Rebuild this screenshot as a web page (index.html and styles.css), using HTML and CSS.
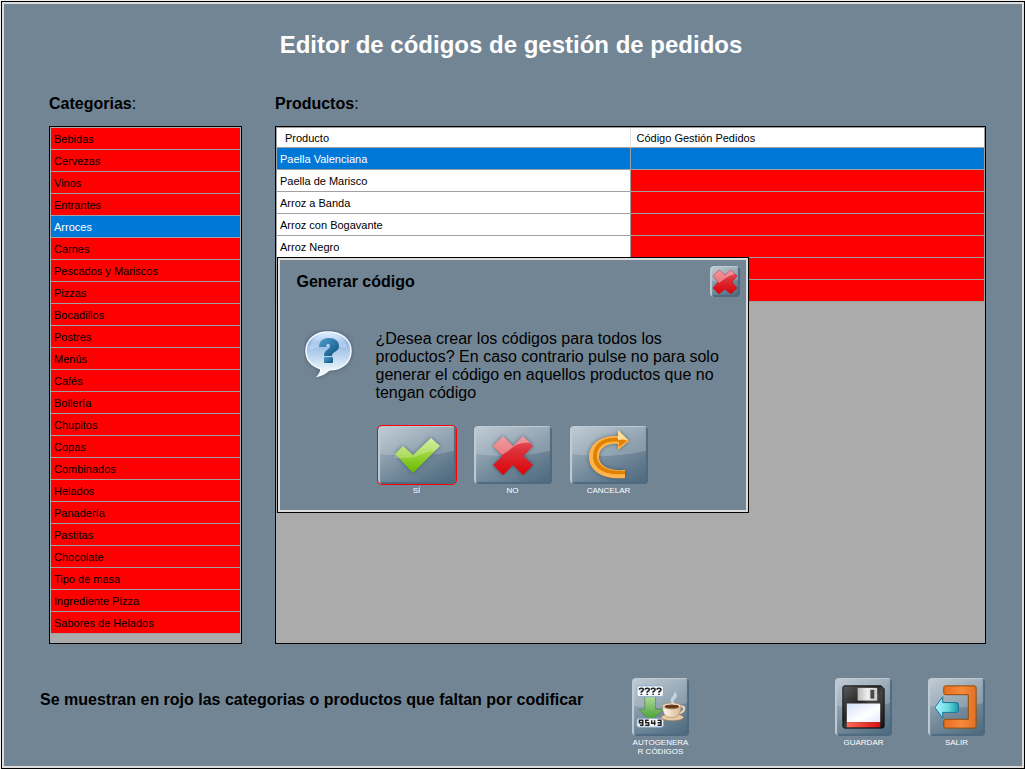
FILE: index.html
```html
<!DOCTYPE html>
<html lang="es">
<head>
<meta charset="utf-8">
<meta name="viewport" content="width=device-width, initial-scale=1">
<title>Editor de códigos de gestión de pedidos</title>
<link rel="stylesheet" href="styles.css">
</head>
<body>
<div class="window">
  <h1 class="title">Editor de códigos de gestión de pedidos</h1>

  <main class="panels">
    <section class="panel">
      <h2 class="heading">Categorias<span class="colon">:</span></h2>
      <ul class="box categories">
        <li><button class="category">Bebidas</button></li>
        <li><button class="category">Cervezas</button></li>
        <li><button class="category">Vinos</button></li>
        <li><button class="category">Entrantes</button></li>
        <li><button class="category selected">Arroces</button></li>
        <li><button class="category">Carnes</button></li>
        <li><button class="category">Pescados y Mariscos</button></li>
        <li><button class="category">Pizzas</button></li>
        <li><button class="category">Bocadillos</button></li>
        <li><button class="category">Postres</button></li>
        <li><button class="category">Menús</button></li>
        <li><button class="category">Cafés</button></li>
        <li><button class="category">Bollería</button></li>
        <li><button class="category">Chupitos</button></li>
        <li><button class="category">Copas</button></li>
        <li><button class="category">Combinados</button></li>
        <li><button class="category">Helados</button></li>
        <li><button class="category">Panadería</button></li>
        <li><button class="category">Pastitas</button></li>
        <li><button class="category">Chocolate</button></li>
        <li><button class="category">Tipo de masa</button></li>
        <li><button class="category">Ingrediente Pizza</button></li>
        <li><button class="category">Sabores de Helados</button></li>
      </ul>
    </section>

    <section class="panel">
      <h2 class="heading">Productos<span class="colon">:</span></h2>
      <div class="box">
        <table class="products">
          <thead>
            <tr><th class="name">Producto</th><th>Código Gestión Pedidos</th></tr>
          </thead>
          <tbody>
            <tr class="selected"><td>Paella Valenciana</td><td class="missing"></td></tr>
            <tr><td>Paella de Marisco</td><td class="missing"></td></tr>
            <tr><td>Arroz a Banda</td><td class="missing"></td></tr>
            <tr><td>Arroz con Bogavante</td><td class="missing"></td></tr>
            <tr><td>Arroz Negro</td><td class="missing"></td></tr>
            <tr><td></td><td class="missing"></td></tr>
            <tr><td></td><td class="missing"></td></tr>
          </tbody>
        </table>
      </div>
    </section>
  </main>

  <footer class="footer">
    <p class="note">Se muestran en rojo las categorias o productos que faltan por codificar</p>
    <button class="action generate">
      <span class="tile square">
        <svg viewBox="0 0 58 58" aria-hidden="true">
          <defs>
            <linearGradient id="arrowGreen" x1="0" y1="0" x2="0" y2="1"><stop offset="0" stop-color="#b5dc9c"/><stop offset="1" stop-color="#3f9a2c"/></linearGradient>
            <linearGradient id="cup" x1="0" y1="0" x2="1" y2="0"><stop offset="0" stop-color="#fffaf0"/><stop offset="1" stop-color="#d9b68e"/></linearGradient>
          </defs>
          <path d="M13 18h11v14h8L19 44 7 32h6z" fill="url(#arrowGreen)" stroke="#4f8f43" stroke-width=".7"/>
          <rect x="5" y="8" width="27" height="11" rx="2" fill="#f4f8fb" stroke="#88a8c8"/>
          <g fill="none" stroke="#222" stroke-width="1.6">
            <path d="M7.500 12q0-1.500 2-1.500t2 1.500q0 1-2 2v1m0 1v1.200M13.500 12q0-1.500 2-1.500t2 1.500q0 1-2 2v1m0 1v1.200M19.500 12q0-1.500 2-1.500t2 1.500q0 1-2 2v1m0 1v1.200M25.500 12q0-1.500 2-1.500t2 1.500q0 1-2 2v1m0 1v1.200"/>
          </g>
          <rect x="5" y="41" width="27" height="9" rx="2" fill="#f4f8fb" stroke="#88a8c8"/>
          <g fill="none" stroke="#222" stroke-width="1.500">
            <path d="M11 45.500H7.500V43H11v5H8M17 43h-3v2.500h3V48h-3.500M20 43v3h4m-1-3v5M26 43h3.500v5H26m0-2.500h3.500"/>
          </g>
          <ellipse cx="41" cy="40" rx="11.500" ry="3.500" fill="#e6c9a3" stroke="#9d7750" stroke-width=".7"/>
          <path d="M48 29q6-1 5 3t-8 4" fill="none" stroke="#e9d3b4" stroke-width="2.200"/>
          <path d="M31 28q0 11 7 12h5q7-1 7-12z" fill="url(#cup)" stroke="#a38763" stroke-width=".6"/>
          <ellipse cx="40.500" cy="28.500" rx="9.500" ry="3" fill="#f8ead6" stroke="#b08d68" stroke-width=".7"/>
          <ellipse cx="40.500" cy="29" rx="7.500" ry="2" fill="#693918"/>
          <path d="M42 27q-5-4-1-8t1-7q6 6 2 9t1 6" fill="#e6edf2" opacity=".65"/>
        </svg>
      </span>
      <span class="caption">AUTOGENERAR CÓDIGOS</span>
    </button>
    <button class="action">
      <span class="tile square">
        <svg viewBox="0 0 58 58" aria-hidden="true">
          <defs>
            <linearGradient id="disk" x1="0" y1="0" x2="1" y2="1"><stop offset="0" stop-color="#5b5b5b"/><stop offset=".4" stop-color="#242424"/><stop offset=".55" stop-color="#444"/><stop offset="1" stop-color="#111"/></linearGradient>
            <linearGradient id="label" x1="0" y1="0" x2="1" y2="1"><stop offset="0" stop-color="#d4e2f8"/><stop offset=".6" stop-color="#fff"/><stop offset="1" stop-color="#dfe8f8"/></linearGradient>
            <linearGradient id="band" x1="0" y1="0" x2="1" y2="0"><stop offset="0" stop-color="#ff6b55"/><stop offset="1" stop-color="#d90f12"/></linearGradient>
            <linearGradient id="shutter" x1="0" y1="0" x2="1" y2="0"><stop offset="0" stop-color="#b8b8b8"/><stop offset=".5" stop-color="#eee"/><stop offset="1" stop-color="#ccc"/></linearGradient>
          </defs>
          <path d="M10 8h37l3 3v38q0 2-2 2H10q-2 0-2-2V10q0-2 2-2z" fill="url(#disk)" stroke="#111"/>
          <path d="M23 10h20v13H23z" fill="url(#shutter)"/>
          <path d="M36 12h4v9h-4z" fill="#4a4a4a"/>
          <path d="M12 26h34v19H12z" fill="url(#label)"/>
          <path d="M12 45h34v5H12z" fill="url(#band)"/>
        </svg>
      </span>
      <span class="caption">GUARDAR</span>
    </button>
    <button class="action">
      <span class="tile square">
        <svg viewBox="0 0 58 58" aria-hidden="true">
          <defs>
            <linearGradient id="door" x1="0" y1="0" x2="1" y2="0"><stop offset="0" stop-color="#e56f22"/><stop offset=".55" stop-color="#f5893c"/><stop offset="1" stop-color="#e27123"/></linearGradient>
            <linearGradient id="exit" x1="0" y1="0" x2="1" y2="0"><stop offset="0" stop-color="#aaf5fa"/><stop offset=".55" stop-color="#6adbe3"/><stop offset="1" stop-color="#159ea5"/></linearGradient>
          </defs>
          <path d="M18 8h29q2 0 2 2v39q0 2-2 2H18q-2 0-2-2v-5q0-2 2-2h23V17H18q-2 0-2-2v-5q0-2 2-2z" fill="url(#door)" stroke="#8f4a08"/>
          <path d="M7 30l8-11v6h14q2 0 2 2v6q0 2-2 2H15v6z" fill="url(#exit)" stroke="#1f6f9c" stroke-linejoin="round"/>
        </svg>
      </span>
      <span class="caption">SALIR</span>
    </button>
  </footer>
</div>

<dialog class="dialog" open aria-labelledby="dialog-title">
  <header class="dialog-header">
    <h2 class="heading" id="dialog-title">Generar código</h2>
    <button class="tile close" aria-label="Cerrar">
      <svg viewBox="0 0 30 31" aria-hidden="true">
        <path d="M9 4l6 5 6-5 6 6-5 6 5 6-6 6-6-5-6 5-6-6 5-6-5-6z" fill="url(#red)" stroke="#b8141c" stroke-width=".6"/>
        <path d="M9 4l6 5 6-5 4 4q-5 1-9 4l-7 5-1-1-5-6z" fill="#fff" opacity=".38"/>
      </svg>
    </button>
  </header>
  <div class="message">
    <svg class="question" viewBox="0 0 50 50" aria-hidden="true">
      <defs>
        <linearGradient id="bubble" x1="0" y1="0" x2="0" y2="1"><stop offset="0" stop-color="#dcecff"/><stop offset=".25" stop-color="#8fb7e6"/><stop offset=".6" stop-color="#c3daf0"/><stop offset="1" stop-color="#fff"/></linearGradient>
        <linearGradient id="mark" x1="0" y1="0" x2="1" y2="1"><stop offset="0" stop-color="#4ea0d0"/><stop offset="1" stop-color="#0f507e"/></linearGradient>
        <linearGradient id="red" x1="0" y1="0" x2="0" y2="1"><stop offset="0" stop-color="#e85a63"/><stop offset=".4" stop-color="#dd2f38"/><stop offset="1" stop-color="#dc0208"/></linearGradient>
      </defs>
      <path class="shadow" d="M24 2c13 0 23 7 23 19S37 40 25 40c-3 3-6 5-11 6 2-2 3-4 3-7C8 36 2 30 2 21 2 9 12 2 24 2z" fill="url(#bubble)" stroke="#f6faff" stroke-width="1.500"/>
      <path d="M5 20C6 10 14 4 24 4s18 6 19 14Q25 13 5 20z" fill="#fff" opacity=".25"/>
      <path d="M15 17c0-7 5-9 10-9 6 0 10 3 10 8 0 6-7 5-7 10h-8c0-7 6-6 6-10 0-3-4-3-4 1z" fill="url(#mark)"/>
      <rect x="20" y="27" width="9" height="6" rx="1" fill="url(#mark)"/>
    </svg>
    <p class="text">¿Desea crear los códigos para todos los productos? En caso contrario pulse no para solo generar el código en aquellos productos que no tengan código</p>
  </div>
  <div class="choices">
    <button class="action focused">
      <span class="tile wide">
        <svg viewBox="0 0 78 58" aria-hidden="true">
          <defs><linearGradient id="green" x1="0" y1="0" x2="0" y2="1"><stop offset="0" stop-color="#c8ec8a"/><stop offset=".45" stop-color="#9bd63c"/><stop offset="1" stop-color="#66b800"/></linearGradient></defs>
          <path class="shadow" d="M17 28l8-8 10 9 18-17 9 8-27 27z" fill="url(#green)"/>
          <path d="M17 28l8-8 10 9 18-17 9 8-5 5q-9 1-15 4-6 3-12 3l-14 0z" fill="#fff" opacity=".22"/>
        </svg>
      </span>
      <span class="caption">SÍ</span>
    </button>
    <button class="action">
      <span class="tile wide">
        <svg viewBox="0 0 78 58" aria-hidden="true">
          <path class="shadow" d="M29 10l10 10 10-10 10 10-9.500 10L59 39 49 49 39 39 29 49 19 39l9.500-9L19 20z" fill="url(#red)"/>
          <path d="M29 10l10 10 10-10 7 7q-10-1-17 4-4 4-11 8L19 20z" fill="#fff" opacity=".4"/>
        </svg>
      </span>
      <span class="caption">NO</span>
    </button>
    <button class="action">
      <span class="tile wide">
        <svg viewBox="0 0 78 58" aria-hidden="true">
          <path class="shadow" d="M48 4l11 11-11 9v-6c-11-1-19 4-19 13s10 14 26 13v8C33 54 19 45 19 31S32 9 48 10z" fill="#ffb34c"/>
          <path d="M48 12c-14-2-25 6-25 18s11 20 32 18v-3c-18 1-28-5-28-15s9-16 22-14v5l8-6-8-4z" fill="#df8200"/>
          <path d="M48 4l10 10q-6-1-10 0z" fill="#ffdc98"/>
        </svg>
      </span>
      <span class="caption">CANCELAR</span>
    </button>
  </div>
</dialog>
</body>
</html>
```

FILE: styles.css
```css
* {
  box-sizing: border-box;
}

body {
  display: flex;
  min-height: 100vh;
  margin: 0;
  padding: 1px 0 0 1px;
  background: #eeeeee;
  color: #000;
  font-family: "Liberation Sans", Arial, sans-serif;
}

h1, h2, p, ul {
  margin: 0;
  padding: 0;
}

button {
  margin: 0;
  padding: 0;
  border: 0;
  background: none;
  color: inherit;
  font: inherit;
  cursor: pointer;
}

svg {
  display: block;
}

.window {
  display: flex;
  flex: 1;
  flex-direction: column;
  border: 1px solid #000;
  box-shadow: inset 0 0 0 2px #dcdcdc;
  background: #728595;
}

.title {
  padding: 28px 4px 0 0;
  color: #fff;
  font-size: 24px;
  line-height: 30px;
  text-align: center;
}

.heading {
  font-size: 16px;
  line-height: 20px;
}

.colon {
  font-weight: normal;
}

.panels {
  display: grid;
  flex: 1;
  grid-template-columns: 193px 1fr;
  gap: 33px;
  padding: 34px 38px 0 47px;
}

.panel {
  display: flex;
  flex-direction: column;
  gap: 12px;
}

.box {
  flex: 1;
  border: 1px solid #000;
  background: #ababab;
  font-size: 11px;
}

.categories {
  padding: 1px;
  list-style: none;
}

.category {
  display: block;
  width: 100%;
  height: 22px;
  padding: 0 3px;
  border-bottom: 1px solid #a0a0a0;
  background: #f00;
  text-align: left;
}

.products {
  width: 100%;
  border: 1px solid #a0a0a0;
  border-bottom: 0;
  border-spacing: 0;
  table-layout: fixed;
}

.products th,
.products td {
  height: 22px;
  padding: 0 3px;
  border-bottom: 1px solid #a0a0a0;
  background: #fff;
  font-weight: normal;
  text-align: left;
}

.products th {
  height: 20px;
  padding: 0 6px;
}

.products .name {
  padding: 0 8px;
  border-right: 1px solid #e0e0e0;
}

.products td:first-child {
  border-right: 1px solid #a0a0a0;
}

.products .missing {
  background: #f00;
}

.category.selected,
.products .selected td {
  background: #0078d7;
  color: #fff;
}

.footer {
  display: flex;
  align-items: flex-start;
  gap: 36px;
  padding: 34px 39px 0 38px;
  height: 124px;
}

.note {
  flex: 1;
  padding-top: 12px;
  font-size: 16px;
  font-weight: bold;
  line-height: 20px;
}

.action {
  display: flex;
  flex-direction: column;
  align-items: center;
  gap: 2px;
  color: #fff;
}

.generate {
  margin-right: 110px;
}

.generate .caption {
  width: 57px;
  word-break: break-all;
}

.caption {
  font-size: 8px;
  line-height: 9px;
  text-align: center;
}

.tile {
  display: block;
  border-radius: 4px;
  background:
    radial-gradient(ellipse 150% 112% at 40% -60%, rgba(255, 255, 255, 0.18) 0 99%, transparent 100%),
    linear-gradient(150deg, #b4c1cc, #748b9c 55%, #4a667b);
  box-shadow:
    inset 2px 1px 1px #bfcbd4,
    inset -2px -2px 1px #4e6a80;
}

.square {
  width: 57px;
  height: 58px;
}

.wide {
  width: 78px;
  height: 58px;
}

.focused .tile {
  outline: 1px solid #f00;
}

.shadow {
  filter: drop-shadow(0 0 2px rgba(40, 60, 80, 0.6));
}

.dialog {
  position: fixed;
  inset: 0;
  width: 472px;
  height: fit-content;
  margin: auto;
  padding: 0;
  border: 1px solid #000;
  box-shadow: inset 0 0 0 2px #dcdcdc;
  background: #728595;
  color: #000;
}

.dialog-header {
  display: flex;
  align-items: flex-start;
  justify-content: space-between;
  padding: 8px 8px 0 19px;
}

.dialog-header .heading {
  padding-top: 6px;
}

.close {
  width: 30px;
  height: 31px;
}

.message {
  display: flex;
  gap: 22px;
  padding: 33px 20px 0 26px;
}

.question {
  flex: none;
  width: 50px;
  height: 50px;
}

.text {
  font-size: 16px;
  line-height: 18px;
}

.choices {
  display: flex;
  gap: 18px;
  padding: 24px 0 17px 100px;
}
```
